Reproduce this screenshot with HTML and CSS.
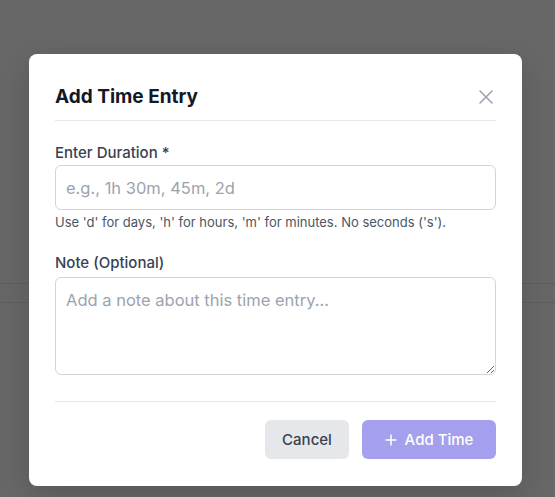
FILE: index.html
```html
<!DOCTYPE html>
<html lang="en">

<head>
  <meta charset="UTF-8" />
  <meta name="viewport" content="width=device-width, initial-scale=1.0" />
  <title>Add Time Entry</title>
  <link rel="stylesheet" href="styles.css">
</head>

<body>
  <div class="modal">
    <!-- Header -->
    <div class="modal-header">
      <h2>Add Time Entry</h2>
      <button class="close-btn" aria-label="Close">
        <svg width="16" height="16" viewBox="0 0 16 16" fill="none" stroke="currentColor" stroke-width="1.6" stroke-linecap="round">
          <path d="M2 2 L14 14 M14 2 L2 14" />
        </svg>
      </button>
    </div>

    <!-- Fields -->
    <div class="form-group">
      <label for="duration">Enter Duration *</label>
      <input type="text" id="duration" placeholder="e.g., 1h 30m, 45m, 2d">
      <p class="hint">Use 'd' for days, 'h' for hours, 'm' for minutes. No seconds ('s').</p>
    </div>
    <div class="form-group">
      <label for="note">Note (Optional)</label>
      <textarea id="note" placeholder="Add a note about this time entry..."></textarea>
    </div>

    <!-- Footer -->
    <div class="modal-footer">
      <button class="btn btn-cancel">Cancel</button>
      <button class="btn btn-add">
        <svg width="12" height="12" viewBox="0 0 12 12" fill="none" stroke="currentColor" stroke-width="1.5" stroke-linecap="round">
          <path d="M6 1 V11 M1 6 H11" />
        </svg>
        Add Time
      </button>
    </div>
  </div>
</body>

</html>
```

FILE: styles.css
```css
body {
  font-family: Inter, "Noto Sans", sans-serif;
  margin: 0;
  padding: 54px 0 0 29px;
  height: 497px;
  box-sizing: border-box;
  overflow: hidden;
  background:
    linear-gradient(#5c5d5c, #5c5d5c) 0 283px / 100% 1px no-repeat,
    linear-gradient(#5c5d5c, #5c5d5c) 0 302px / 100% 1px no-repeat,
    #666766;
}

.modal {
  width: 493px;
  height: 432px;
  box-sizing: border-box;
  padding: 29px 26px 0;
  background: white;
  border-radius: 8px;
  box-shadow: 0 10px 30px rgba(0, 0, 0, 0.15);
}

.modal-header {
  display: flex;
  justify-content: space-between;
  align-items: center;
  padding-bottom: 9px;
  border-bottom: 1px solid #e5e7eb;
}

.modal-header h2 {
  margin: 0;
  font-size: 19px;
  line-height: 28px;
  font-weight: 700;
  color: #111827;
}

.close-btn {
  display: flex;
  padding: 0;
  margin-right: 2px;
  border: none;
  background: none;
  color: #9ca3af;
  cursor: pointer;
}

.form-group {
  display: flex;
  flex-direction: column;
  margin-top: 22px;
}

.form-group + .form-group {
  margin-top: 23px;
}

.form-group label {
  font-size: 15px;
  line-height: 20px;
  font-weight: 500;
  color: #374151;
  margin-bottom: 2px;
}

.form-group + .form-group label {
  margin-bottom: 4px;
}

.form-group input,
.form-group textarea {
  font-family: inherit;
  font-size: 16.5px;
  color: #111827;
  border: 1px solid #d1d5db;
  border-radius: 6px;
  padding: 0 10px;
  box-sizing: border-box;
  width: 100%;
}

.form-group input {
  height: 45px;
}

.form-group textarea {
  height: 98px;
  padding-top: 12px;
  line-height: 20px;
}

.form-group input::placeholder,
.form-group textarea::placeholder {
  color: #9ca3af;
}

.hint {
  margin: 4px 0 0;
  font-size: 13px;
  line-height: 16px;
  color: #4b5563;
}

.modal-footer {
  display: flex;
  justify-content: flex-end;
  gap: 13px;
  margin-top: 26px;
  padding-top: 18px;
  border-top: 1px solid #e5e7eb;
}

.btn {
  display: flex;
  align-items: center;
  justify-content: center;
  gap: 8px;
  height: 39px;
  border: none;
  border-radius: 6px;
  font-family: inherit;
  font-size: 15px;
  font-weight: 500;
  cursor: pointer;
}

.btn-cancel {
  width: 84px;
  background: #e5e7eb;
  color: #374151;
}

.btn-add {
  width: 134px;
  background: #a5a0ed;
  color: white;
}
```
